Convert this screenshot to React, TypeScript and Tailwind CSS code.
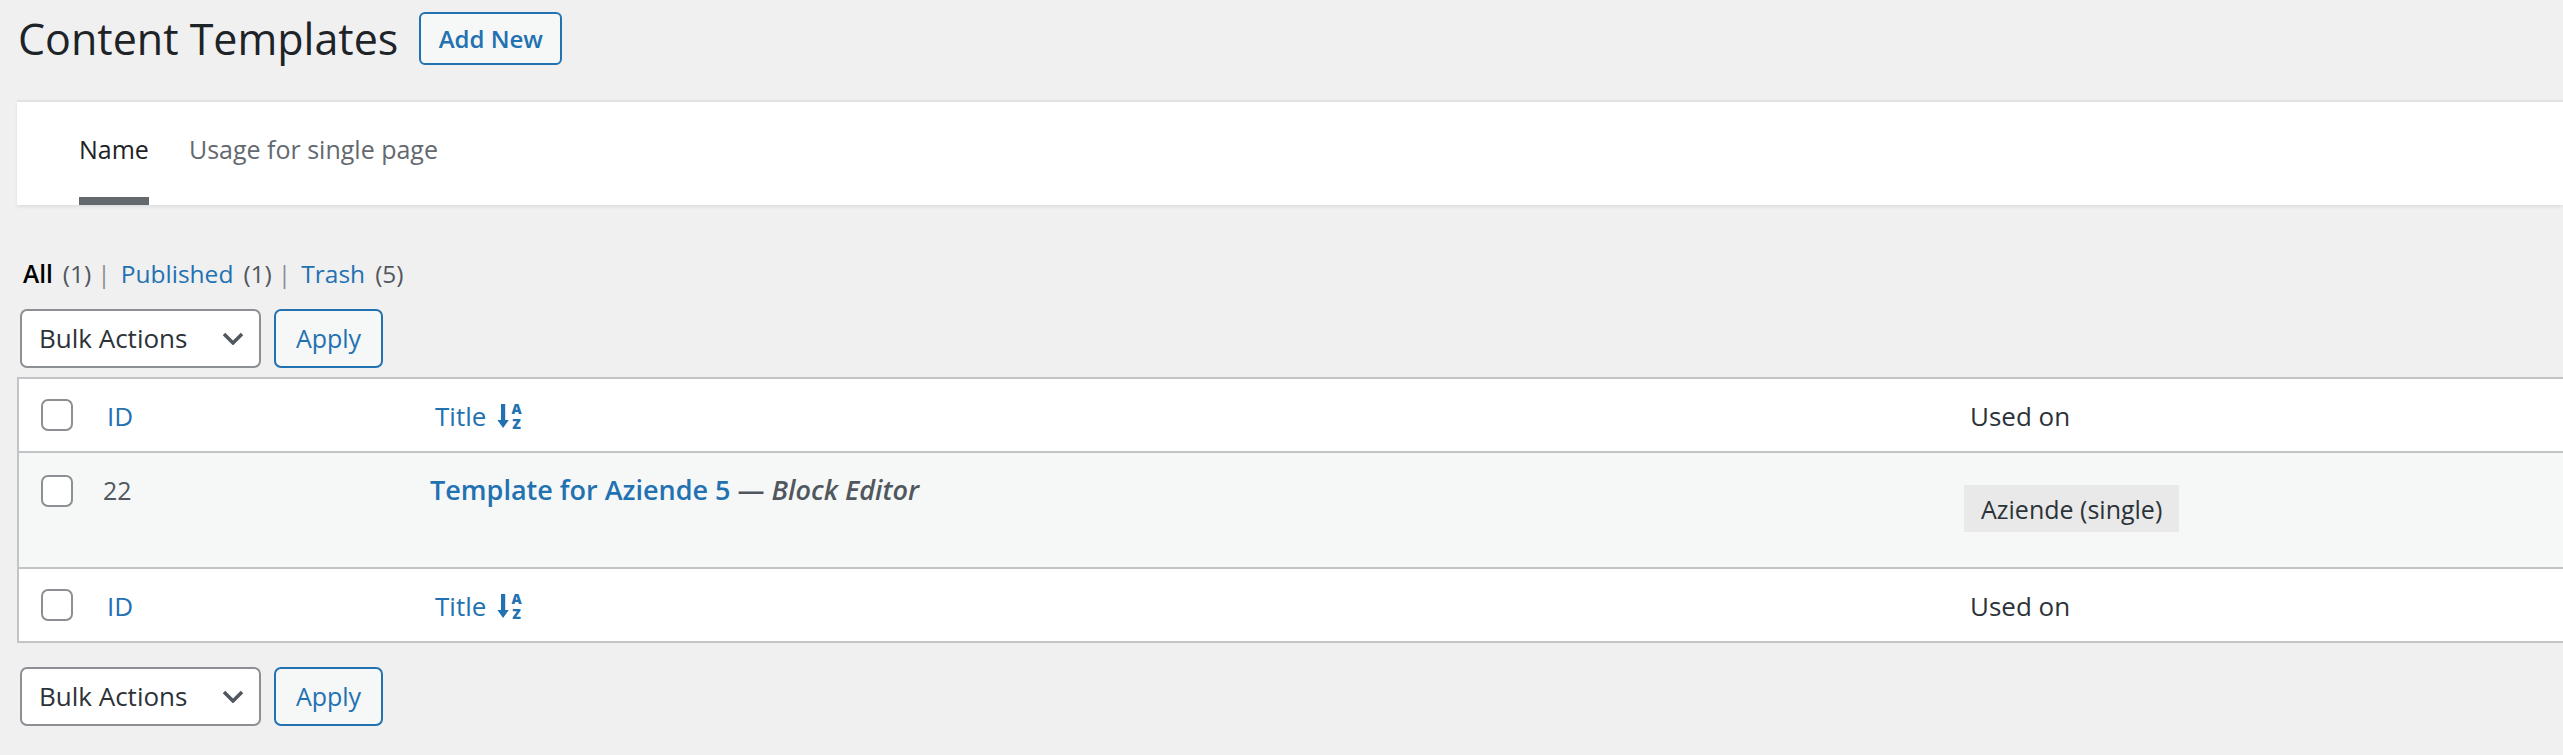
import React from 'react';

const font = "font-['Open_Sans','Noto_Sans',sans-serif]";

const SortIcon: React.FC = () => (
  <svg width="26" height="28" viewBox="0 0 26 28" className="ml-[12px] text-[#2271b1] overflow-visible">
    <path d="M3 2h4.2v16h3.6L5.1 26-0.6 18H3z" fill="currentColor" />
    <text x="18.5" y="12" textAnchor="middle" fontSize="14" fontWeight="800" fill="currentColor" fontFamily="Open Sans, sans-serif">A</text>
    <text x="18.5" y="27" textAnchor="middle" fontSize="14" fontWeight="800" fill="currentColor" fontFamily="Open Sans, sans-serif">Z</text>
  </svg>
);

const Checkbox: React.FC = () => (
  <span className="block w-[32px] h-[32px] rounded-[7px] border-2 border-[#8c8f94] bg-white" />
);

const BulkBar: React.FC = () => (
  <div className="flex gap-[13px]">
    <div className="flex items-center justify-between w-[241px] h-[59px] pl-[17px] pr-[15px] bg-white border-2 border-[#8c8f94] rounded-[7px] text-[26px] text-[#2c3338]">
      <span>Bulk Actions</span>
      <svg width="22" height="13" viewBox="0 0 22 13">
        <path d="M2 2l9 9 9-9" fill="none" stroke="#50575e" strokeWidth="3.5" />
      </svg>
    </div>
    <button className="w-[109px] h-[59px] bg-[#f6f7f7] border-2 border-[#2271b1] rounded-[7px] text-[25px] text-[#2271b1]">
      Apply
    </button>
  </div>
);

const HeadRow: React.FC = () => (
  <div className="flex items-center h-[74px] bg-white border-b-2 border-[#c3c4c7] text-[26px]">
    <div className="w-[64px] pl-[22px]">
      <Checkbox />
    </div>
    <div className="w-[327px] pl-[24px] pt-[2px] text-[#2271b1]">ID</div>
    <div className="w-[1540px] pl-[25px] pt-[2px] flex items-center text-[#2271b1]">
      Title
      <SortIcon />
    </div>
    <div className="flex-1 pl-[20px] pt-[2px] text-[#2c3338]">Used on</div>
  </div>
);

export default function App() {
  return (
    <div className={`min-h-screen bg-[#f0f0f1] ${font} pl-[17px] pt-[12px] pb-[29px] text-[#3c434a]`}>
      <div className="flex items-center h-[53px]">
        <h1 className="ml-[1px] text-[43px] leading-none text-[#1d2327]">Content Templates</h1>
        <button className="ml-[21px] w-[143px] h-[53px] border-2 border-[#2271b1] rounded-[6px] bg-[#f6f7f7] text-[24px] font-semibold text-[#2271b1]">
          Add New
        </button>
      </div>

      <div className="mt-[35px] h-[105px] bg-white border-t-2 border-[#e2e2e3] shadow-[0_2px_3px_rgba(0,0,0,0.07)] flex items-end pl-[62px] gap-[40px] text-[25px] leading-[32px]">
        <div className="flex flex-col items-stretch">
          <span className="text-[#1d2327]">Name</span>
          <span className="mt-[32px] h-[8px] bg-[#646970]" />
        </div>
        <div className="flex flex-col">
          <span className="text-[#646970]">Usage for single page</span>
          <span className="mt-[32px] h-[8px]" />
        </div>
      </div>

      <div className="mt-[53px] flex items-center text-[24.5px] leading-[32px] pl-[6px]">
        <span className="font-semibold text-black">All</span>
        <span className="ml-[10px] text-[#50575e]">(1)</span>
        <span className="ml-[6px] text-[#8c8f94]">|</span>
        <span className="ml-[10px] text-[#2271b1]">Published</span>
        <span className="ml-[10px] text-[#50575e]">(1)</span>
        <span className="ml-[6px] text-[#8c8f94]">|</span>
        <span className="ml-[10px] text-[#2271b1]">Trash</span>
        <span className="ml-[10px] text-[#50575e]">(5)</span>
      </div>

      <div className="mt-[19px] pl-[3px]">
        <BulkBar />
      </div>

      <div className="mt-[9px] border-t-2 border-l-2 border-[#c3c4c7]">
        <HeadRow />
        <div className="flex items-start h-[116px] bg-[#f6f7f7] border-b-2 border-[#c3c4c7] text-[25px] leading-[32px]">
          <div className="w-[64px] pl-[22px] pt-[22px]">
            <Checkbox />
          </div>
          <div className="w-[327px] pl-[20px] pt-[21px] text-[#50575e]">22</div>
          <div className="w-[1540px] pl-[20px] pt-[21px] font-semibold text-[27px]">
            <span className="text-[#2271b1]">Template for Aziende 5</span>
            <span className="text-[#50575e]"> — </span>
            <span className="text-[#50575e] italic">Block Editor</span>
          </div>
          <div className="flex-1 pt-[32px] pl-[14px]">
            <span className="inline-flex items-center h-[47px] px-[17px] bg-[#e9e9e9] text-[#2c3338]">Aziende (single)</span>
          </div>
        </div>
        <HeadRow />
      </div>

      <div className="mt-[24px] pl-[3px]">
        <BulkBar />
      </div>
    </div>
  );
}
